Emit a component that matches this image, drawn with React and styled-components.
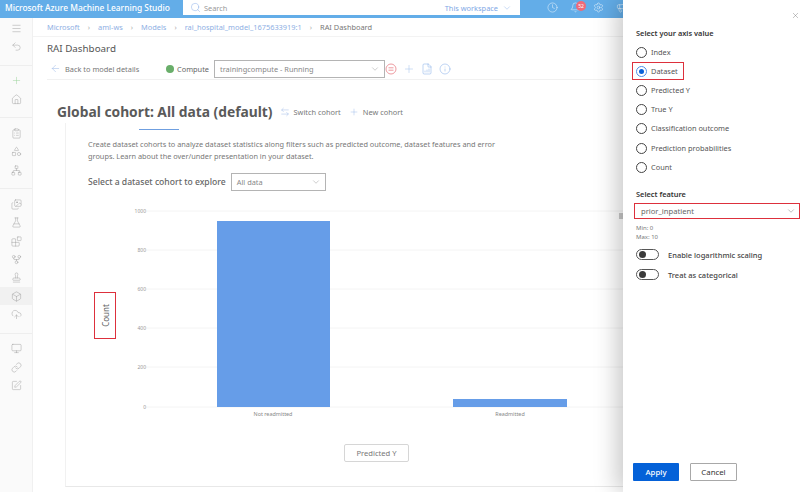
import React from "react";
import styled, { createGlobalStyle } from "styled-components";
import {
  Menu, Undo2, Plus, Home, ClipboardList, Shapes, Network, Images, FlaskConical, Blocks,
  GitFork, Stamp, Box, CloudUpload, Monitor, Link, SquarePen, Search, ChevronDown, ArrowLeft,
  Clock, Bell, Settings, Megaphone, ArrowLeftRight, Info, FileBarChart, X,
} from "lucide-react";

const Global = createGlobalStyle`
  html, body { margin: 0; padding: 0; background: #fff; overflow: hidden; }
  * { box-sizing: border-box; }
  body { font-family: "Noto Sans", "Open Sans", sans-serif; }
`;

const Page = styled.div`
  position: relative; width: 800px; height: 492px; overflow: hidden;
  display: flex; flex-direction: column; background: #fff;
`;
const TopBar = styled.header`
  height: 18px; flex: none; background: #63ade8; display: flex; align-items: flex-start; color: #fff;
`;
const Brand = styled.div`
  width: 183px; padding-left: 5px; font-size: 8.4px; line-height: 16px; white-space: nowrap; font-weight: 500;
`;
const SearchBox = styled.div`
  width: 337px; height: 15px; background: #fff; display: flex; align-items: center;
  padding: 0 8px 0 7px; gap: 3px; color: #9a9a9a; font-size: 7.4px;
`;
const Scope = styled.div`
  margin-left: auto; display: flex; align-items: center; gap: 4px; color: #7fa8e6; font-size: 7.4px;
`;
const TopIcons = styled.div`
  display: flex; gap: 12px; padding: 2px 0 0 27px; align-items: center;
`;
const BellWrap = styled.span`
  position: relative; display: flex;
`;
const Badge = styled.span`
  position: absolute; top: -1px; left: 6px; width: 10px; height: 10px; border-radius: 50%;
  background: #ee6a78; color: #fff; font-size: 5px; line-height: 10px; text-align: center;
`;
const Body = styled.div`
  flex: 1; display: flex; min-height: 0;
`;
const Sidebar = styled.nav`
  width: 33px; flex: none; background: #fafafa; border-right: 1px solid #f0f0f0;
`;
const NavGroup = styled.div`
  padding: 6px 0 9px; border-bottom: 1px solid #eeeeee;
  &:first-child { padding-top: 1px; }
  &:last-child { border-bottom: 0; }
`;
const NavItem = styled.div`
  height: 18.33px; display: flex; align-items: center; justify-content: center;
  color: ${p => p.$color || "#9a9a9a"};
  background: ${p => (p.$active ? "#f1f1f1" : "transparent")};
`;
const Content = styled.main`
  flex: 1; min-width: 0; display: flex; flex-direction: column;
`;
const Crumbs = styled.div`
  height: 19px; flex: none; padding-left: 14px; display: flex; align-items: center; gap: 8px;
  font-size: 7.4px; color: #8fb0e4; border-bottom: 1px solid #f3f3f3; white-space: nowrap;
`;
const CrumbSep = styled.span`
  color: #aaa;
`;
const CrumbCurrent = styled.span`
  color: #777;
`;
const PageTitle = styled.h1`
  margin: 0; padding: 3px 0 0 14px; height: 21px; font-size: 9.8px; line-height: 18px; font-weight: 400; color: #555;
`;
const Toolbar = styled.div`
  margin-left: 14px; height: 22px; display: flex; align-items: center; border-bottom: 1px solid #f1f1f1;
  font-size: 7.4px; color: #777;
`;
const BackLink = styled.span`
  display: flex; align-items: center; gap: 4px; width: 119px; padding-left: 3px; white-space: nowrap;
`;
const ComputeDot = styled.span`
  width: 8px; height: 8px; border-radius: 50%; background: #69ae6a; margin-right: 3px;
`;
const ComputeLabel = styled.span`
  color: #666; width: 37px;
`;
const Dropdown = styled.div`
  height: ${p => p.$h}px; width: ${p => p.$w}px; border: 1px solid #b4b4b4; display: flex; align-items: center;
  justify-content: space-between; padding: 0 4px 0 5px; color: #888; font-size: 7.4px; flex: none;
`;
const ToolIcons = styled.div`
  display: flex; align-items: center; gap: 6px;
`;
const HeadingRow = styled.div`
  margin: 20px 0 0 24px; height: 23px; display: flex; align-items: center; white-space: nowrap;
`;
const Heading = styled.h2`
  margin: 0; font-size: 13.8px; line-height: 23px; font-weight: 700; color: #5a5a5a;
`;
const HeadAction = styled.span`
  display: flex; align-items: center; gap: 4px; font-size: 7.4px; color: #777; margin-left: ${p => p.$ml}px;
`;
const Card = styled.section`
  margin-left: 32px; height: 364px; border-left: 1px solid #f1f1f1; border-bottom: 1px solid #e8e8e8;
  display: flex; flex-direction: column;
`;
const TabMark = styled.div`
  width: 40px; height: 1px; margin: 6px 0 0 73px; background: #6f9fe0;
`;
const Description = styled.p`
  margin: 8px 0 0 22px; width: 415px; font-size: 7.35px; line-height: 12px; color: #777;
`;
const CohortRow = styled.div`
  margin: 11px 0 0 22px; display: flex; align-items: center; gap: 5px;
`;
const CohortLabel = styled.span`
  font-size: 8.6px; color: #666; font-weight: 500; white-space: nowrap;
`;
const ChartRow = styled.div`
  display: flex; align-items: flex-start; margin-top: 14px; padding-left: 28px;
`;
const AxisBox = styled.div`
  width: 22px; height: 47px; margin-top: 87px; border: 1.5px solid #dd303c;
  display: flex; align-items: center; justify-content: center;
`;
const AxisText = styled.span`
  transform: rotate(-90deg); font-size: 8px; color: #666; white-space: nowrap;
`;
const ChartSvg = styled.svg`
  display: block; flex: none; font-family: "Noto Sans", sans-serif;
`;
const XAxisButton = styled.div`
  width: 65px; height: 18px; margin: 24px 0 0 278px; border: 1px solid #d6d6d6; border-radius: 2px;
  font-size: 7.6px; line-height: 16px; text-align: center; color: #777;
`;
const Panel = styled.aside`
  position: absolute; top: 0; right: 0; bottom: 0; width: 177px; background: #fff;
  box-shadow: -6px 0 22px rgba(0, 0, 0, 0.22); padding: 27px 0 11px 13px; display: flex; flex-direction: column;
`;
const CloseIcon = styled.span`
  position: absolute; top: 11px; right: 0; display: flex; color: #666;
`;
const PanelLabel = styled.div`
  font-size: 7.4px; font-weight: 600; line-height: 12px; color: #333;
`;
const RadioList = styled.div`
  margin-top: 4px; display: flex; flex-direction: column;
`;
const RadioRow = styled.div`
  position: relative; height: 19.1px; display: flex; align-items: center; gap: 4px; font-size: 7.4px; line-height: 17px; color: #555;
`;
const RadioDot = styled.span`
  width: 11px; height: 11px; border-radius: 50%; flex: none;
  border: 1px solid ${p => (p.$on ? "#4f8fe8" : "#444")};
  display: flex; align-items: center; justify-content: center;
  &::after { content: ""; width: 5px; height: 5px; border-radius: 50%; background: ${p => (p.$on ? "#0b62d8" : "transparent")}; }
`;
const RadioHighlight = styled.span`
  position: absolute; left: -4px; top: 0; width: 52px; height: 18px; border: 1px solid #dd303c;
`;
const FeatureLabel = styled(PanelLabel)`
  margin-top: 11px;
`;
const FeatureSelect = styled.div`
  margin: 3px 0 0 -2px; height: 16px; border: 1px solid #dd303c; display: flex; align-items: center;
  justify-content: space-between; padding: 0 3px 0 6px; font-size: 7.6px; color: #666;
`;
const Range = styled.div`
  margin-top: 5px; font-size: 6px; line-height: 9px; color: #777;
`;
const ToggleList = styled.div`
  margin-top: 3px;
`;
const ToggleRow = styled.div`
  display: flex; align-items: center; height: 20px; gap: 9px; font-size: 7.5px; font-weight: 500; color: #444;
`;
const Toggle = styled.span`
  width: 23px; height: 11px; border: 1px solid #555; border-radius: 6px; padding-left: 2px; display: flex; align-items: center;
  &::after { content: ""; width: 7px; height: 7px; border-radius: 50%; background: #3a3a3a; }
`;
const Footer = styled.div`
  margin: auto 0 0 -3px; display: flex; gap: 11px;
`;
const PrimaryButton = styled.div`
  width: 46px; height: 18px; background: #0461d8; color: #fff; font-size: 7.8px; font-weight: 500; line-height: 18px; text-align: center; border-radius: 1px;
`;
const SecondaryButton = styled.div`
  width: 47px; height: 18px; border: 1px solid #a8a8a8; color: #333; font-size: 7.8px; line-height: 16px; text-align: center; border-radius: 1px;
`;

const StopIcon = () => (
  <svg width="12" height="12" viewBox="0 0 12 12" fill="none" stroke="#ee9aa0" strokeWidth="1">
    <circle cx="6" cy="6" r="5" />
    <path d="M3.5 4.8h5M3.5 7.2h5" />
  </svg>
);

const ic = { size: 11, strokeWidth: 1 };
const nav = [
  [[Menu], [Undo2]],
  [[Plus, "#93d193"], [Home]],
  [[ClipboardList], [Shapes], [Network]],
  [[Images], [FlaskConical], [Blocks], [GitFork], [Stamp], [Box, null, true], [CloudUpload]],
  [[Monitor], [Link], [SquarePen]],
];
const radios = ["Index", "Dataset", "Predicted Y", "True Y", "Classification outcome", "Prediction probabilities", "Count"];
const ticks = [[1000, 6], [800, 45], [600, 84], [400, 123], [200, 162], [0, 202]];

export default function App() {
  return (
    <Page>
      <Global />
      <TopBar>
        <Brand>Microsoft Azure Machine Learning Studio</Brand>
        <SearchBox>
          <Search size={11} strokeWidth={1} color="#7fa8e6" />
          <span>Search</span>
          <Scope>This workspace <ChevronDown size={10} strokeWidth={1} /></Scope>
        </SearchBox>
        <TopIcons>
          <Clock size={11} strokeWidth={1} />
          <BellWrap><Bell size={11} strokeWidth={1} /><Badge>52</Badge></BellWrap>
          <Settings size={11} strokeWidth={1} />
          <Megaphone size={11} strokeWidth={1} />
        </TopIcons>
      </TopBar>
      <Body>
        <Sidebar>
          {nav.map((group, i) => (
            <NavGroup key={i}>
              {group.map(([Icon, color, active], j) => (
                <NavItem key={j} $color={color} $active={active}><Icon {...ic} /></NavItem>
              ))}
            </NavGroup>
          ))}
        </Sidebar>
        <Content>
          <Crumbs>
            <span>Microsoft</span><CrumbSep>›</CrumbSep>
            <span>aml-ws</span><CrumbSep>›</CrumbSep>
            <span>Models</span><CrumbSep>›</CrumbSep>
            <span>rai_hospital_model_1675633919:1</span><CrumbSep>›</CrumbSep>
            <CrumbCurrent>RAI Dashboard</CrumbCurrent>
          </Crumbs>
          <PageTitle>RAI Dashboard</PageTitle>
          <Toolbar>
            <BackLink><ArrowLeft size={11} strokeWidth={1} color="#8fb0e4" /> Back to model details</BackLink>
            <ComputeDot />
            <ComputeLabel>Compute</ComputeLabel>
            <Dropdown $w={171} $h={18}>trainingcompute - Running <ChevronDown size={10} strokeWidth={1} /></Dropdown>
            <ToolIcons>
              <StopIcon />
              <Plus size={12} strokeWidth={1} color="#9dbce8" />
              <FileBarChart size={12} strokeWidth={1} color="#7fa8e6" />
              <Info size={12} strokeWidth={1} color="#7fa8e6" />
            </ToolIcons>
          </Toolbar>
          <HeadingRow>
            <Heading>Global cohort: All data (default)</Heading>
            <HeadAction $ml={7}><ArrowLeftRight size={10} strokeWidth={1} color="#8fb0e4" /> Switch cohort</HeadAction>
            <HeadAction $ml={8}><Plus size={10} strokeWidth={1} color="#8fb0e4" /> New cohort</HeadAction>
          </HeadingRow>
          <Card>
            <TabMark />
            <Description>
              Create dataset cohorts to analyze dataset statistics along filters such as predicted outcome, dataset features and error groups. Learn about the over/under presentation in your dataset.
            </Description>
            <CohortRow>
              <CohortLabel>Select a dataset cohort to explore</CohortLabel>
              <Dropdown $w={95} $h={18}>All data <ChevronDown size={10} strokeWidth={1} /></Dropdown>
            </CohortRow>
            <ChartRow>
              <AxisBox><AxisText>Count</AxisText></AxisBox>
              <ChartSvg width="510" height="215" viewBox="0 0 510 215">
                {ticks.map(([v, y]) => (
                  <g key={v}>
                    <line x1="30" x2="510" y1={y} y2={y} stroke="#f4f4f4" />
                    <text x="30" y={y + 2} textAnchor="end" fontSize="5" fill="#999">{v}</text>
                  </g>
                ))}
                <rect x="101" y="16" width="113" height="186" fill="#669de8" />
                <rect x="337" y="194" width="114" height="8" fill="#669de8" />
                <text x="157" y="211" textAnchor="middle" fontSize="5.4" fill="#888">Not readmitted</text>
                <text x="394" y="211" textAnchor="middle" fontSize="5.4" fill="#888">Readmitted</text>
                <path d="M503 9h4M503 11h4M503 13h4" stroke="#777" strokeWidth=".8" />
              </ChartSvg>
            </ChartRow>
            <XAxisButton>Predicted Y</XAxisButton>
          </Card>
        </Content>
      </Body>
      <Panel>
        <CloseIcon><X size={9} strokeWidth={1} /></CloseIcon>
        <PanelLabel>Select your axis value</PanelLabel>
        <RadioList>
          {radios.map((r, i) => (
            <RadioRow key={r}>
              <RadioDot $on={i === 1} />
              {r}
              {i === 1 && <RadioHighlight />}
            </RadioRow>
          ))}
        </RadioList>
        <FeatureLabel>Select feature</FeatureLabel>
        <FeatureSelect>prior_inpatient <ChevronDown size={10} strokeWidth={1} /></FeatureSelect>
        <Range>Min: 0<br />Max: 10</Range>
        <ToggleList>
          <ToggleRow><Toggle /> Enable logarithmic scaling</ToggleRow>
          <ToggleRow><Toggle /> Treat as categorical</ToggleRow>
        </ToggleList>
        <Footer>
          <PrimaryButton>Apply</PrimaryButton>
          <SecondaryButton>Cancel</SecondaryButton>
        </Footer>
      </Panel>
    </Page>
  );
}
